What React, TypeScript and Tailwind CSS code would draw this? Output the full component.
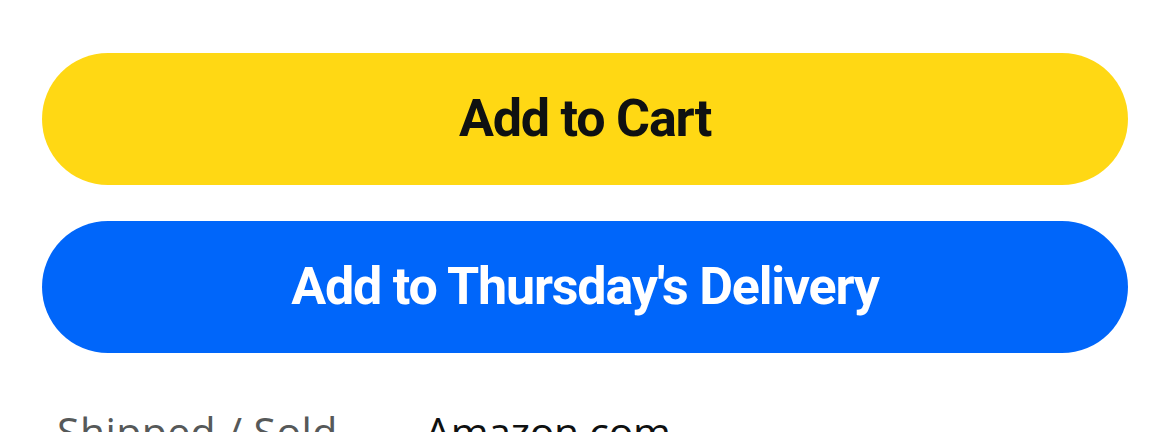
import React from "react";

export default function App() {
  return (
    <div className="w-[1170px] h-[432px] overflow-hidden bg-white">
      <div className="px-[42px] pt-[53px] flex flex-col gap-[36px]">
        <button className="h-[132px] w-full rounded-full bg-[#ffd814] flex items-center justify-center">
          <span className="text-[52px] font-bold text-[#0f1111] tracking-[-1.2px]" style={{ fontFamily: "Roboto, sans-serif" }}>
            Add to Cart
          </span>
        </button>
        <button className="h-[132px] w-full rounded-full bg-[#0066fa] flex items-center justify-center">
          <span className="text-[52px] font-bold text-white tracking-[-1.2px]" style={{ fontFamily: "Roboto, sans-serif" }}>
            Add to Thursday's Delivery
          </span>
        </button>
      </div>
      <div className="flex pl-[57px] mt-[58px] text-[41px] leading-none" style={{ fontFamily: "'Open Sans', sans-serif" }}>
        <span className="w-[368px] text-[#565959] tracking-[0.4px]">Shipped / Sold</span>
        <span className="text-[#0f1111] tracking-[-0.3px]">Amazon.com</span>
      </div>
    </div>
  );
}
